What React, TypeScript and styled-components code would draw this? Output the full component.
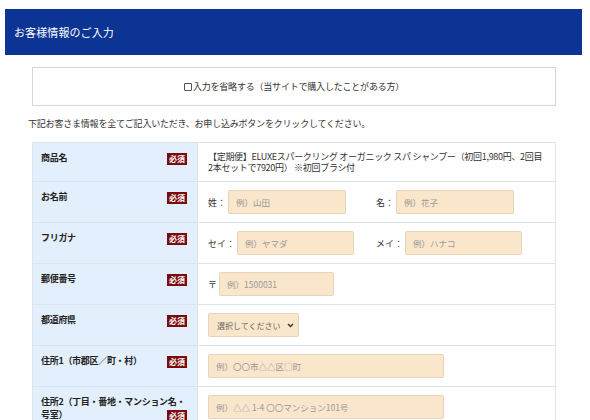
import React from "react";
import styled, { createGlobalStyle } from "styled-components";

const Global = createGlobalStyle`
  html, body { margin: 0; padding: 0; background: #fff; }
  body {
    font-family: "Noto Sans CJK JP", "Noto Sans", sans-serif;
    color: #333;
  }
  * { box-sizing: border-box; }
`;

const Page = styled.div`
  padding: 9px 8px 0 5px;
`;

const Header = styled.header`
  height: 46px;
  background: #0c3494;
  color: #fff;
  display: flex;
  align-items: center;
  padding-left: 9px;
  font-size: 11px;
  letter-spacing: 0.1px;
`;

const Body = styled.div`
  padding: 12px 26px 0 27px;
`;

const SkipBox = styled.label`
  height: 39px;
  border: 1px solid #d6d6d6;
  display: flex;
  align-items: center;
  justify-content: center;
  font-size: 9px;
  line-height: 13px;
  color: #333;
  letter-spacing: -0.2px;
`;

const Check = styled.input`
  appearance: none;
  width: 8px;
  height: 8px;
  margin: 0 1px 0 0;
  border: 1px solid #555;
  border-radius: 1px;
  background: #fff;
`;

const Note = styled.p`
  margin: 11px 0 12px -4px;
  font-size: 9px;
  line-height: 13px;
  color: #333;
  letter-spacing: -0.2px;
`;

const FormTable = styled.table`
  width: 100%;
  border-collapse: collapse;
  border: 1px solid #dde3ea;
  font-size: 9px;
`;

const Th = styled.th`
  width: 165px;
  background: #e4effd;
  text-align: left;
  vertical-align: top;
  padding: 8px 10px 8px 8px;
  font-weight: bold;
  line-height: 13px;
  color: #222;
  letter-spacing: -0.3px;
  border: 1px solid #dde3ea;
`;

const Td = styled.td`
  vertical-align: top;
  padding: 8px 10px;
  border: 1px solid #dde3ea;
  background: #fff;
  line-height: 11px;
`;

const Badge = styled.span`
  float: right;
  margin-top: 2px;
  width: 20px;
  height: 12px;
  background: #7a0b0b;
  color: #fff;
  font-size: 8px;
  line-height: 12px;
  text-align: center;
  font-weight: bold;
  letter-spacing: 0;
`;

const Product = styled.div`
  line-height: 11px;
  color: #333;
  letter-spacing: -0.3px;
  white-space: nowrap;
`;

const Pair = styled.div`
  display: grid;
  grid-template-columns: 168px 1fr;
`;

const Field = styled.div`
  display: flex;
  align-items: center;
  gap: 2px;
  height: 24px;
`;

const FieldLabel = styled.span`
  font-size: 9px;
  color: #333;
  white-space: nowrap;
`;

const TextInput = styled.input<{ $w: number }>`
  width: ${(p) => p.$w}px;
  height: 24px;
  margin: 0;
  padding: 0 7px;
  background: #fae6cb;
  border: 1px solid #e8d5b8;
  border-radius: 2px;
  font-family: inherit;
  font-size: 8.5px;
  color: #333;
  outline: none;
  &::placeholder { color: #999; }
`;

const SelectWrap = styled.div`
  position: relative;
  width: 91px;
  height: 24px;
`;

const Select = styled.select`
  appearance: none;
  width: 100%;
  height: 24px;
  margin: 0;
  padding: 0 0 0 8px;
  background: #fae6cb;
  border: 1px solid #e8d5b8;
  border-radius: 2px;
  font-family: inherit;
  font-size: 8px;
  color: #666;
  outline: none;
`;

const Chevron = styled.svg`
  position: absolute;
  right: 5px;
  top: 10px;
  pointer-events: none;
`;

const Req = () => <Badge>必須</Badge>;

export default function App() {
  return (
    <>
      <Global />
      <Page>
        <Header>お客様情報のご入力</Header>
        <Body>
          <SkipBox>
            <Check type="checkbox" />
            入力を省略する（当サイトで購入したことがある方）
          </SkipBox>
          <Note>下記お客さま情報を全てご記入いただき、お申し込みボタンをクリックしてください。</Note>
          <FormTable>
            <tbody>
              <tr>
                <Th>商品名<Req /></Th>
                <Td>
                  <Product>
                    【定期便】ELUXEスパークリング オーガニック スパ シャンプー（初回1,980円、2回目
                    <br />
                    2本セットで7920円） ※初回ブラシ付
                  </Product>
                </Td>
              </tr>
              <tr>
                <Th>お名前<Req /></Th>
                <Td>
                  <Pair>
                    <Field>
                      <FieldLabel>姓：</FieldLabel>
                      <TextInput $w={118} placeholder="例）山田" />
                    </Field>
                    <Field>
                      <FieldLabel>名：</FieldLabel>
                      <TextInput $w={118} placeholder="例）花子" />
                    </Field>
                  </Pair>
                </Td>
              </tr>
              <tr>
                <Th>フリガナ<Req /></Th>
                <Td>
                  <Pair>
                    <Field>
                      <FieldLabel>セイ：</FieldLabel>
                      <TextInput $w={117} placeholder="例）ヤマダ" />
                    </Field>
                    <Field>
                      <FieldLabel>メイ：</FieldLabel>
                      <TextInput $w={117} placeholder="例）ハナコ" />
                    </Field>
                  </Pair>
                </Td>
              </tr>
              <tr>
                <Th>郵便番号<Req /></Th>
                <Td>
                  <Field>
                    <FieldLabel>〒</FieldLabel>
                    <TextInput $w={115} placeholder="例）1500031" />
                  </Field>
                </Td>
              </tr>
              <tr>
                <Th>都道府県<Req /></Th>
                <Td>
                  <Field>
                    <SelectWrap>
                      <Select defaultValue="">
                        <option value="">選択してください</option>
                      </Select>
                      <Chevron width="7" height="5" viewBox="0 0 7 5">
                        <path d="M1 1l2.5 2.5L6 1" fill="none" stroke="#333" strokeWidth="1.4" />
                      </Chevron>
                    </SelectWrap>
                  </Field>
                </Td>
              </tr>
              <tr>
                <Th>住所1（市郡区／町・村）<Req /></Th>
                <Td>
                  <Field>
                    <TextInput $w={236} placeholder="例）〇〇市△△区□町" />
                  </Field>
                </Td>
              </tr>
              <tr>
                <Th>住所2（丁目・番地・マンション名・号室）<Req /></Th>
                <Td>
                  <Field>
                    <TextInput $w={236} placeholder="例）△△ 1-4 〇〇マンション101号" />
                  </Field>
                </Td>
              </tr>
            </tbody>
          </FormTable>
        </Body>
      </Page>
    </>
  );
}
